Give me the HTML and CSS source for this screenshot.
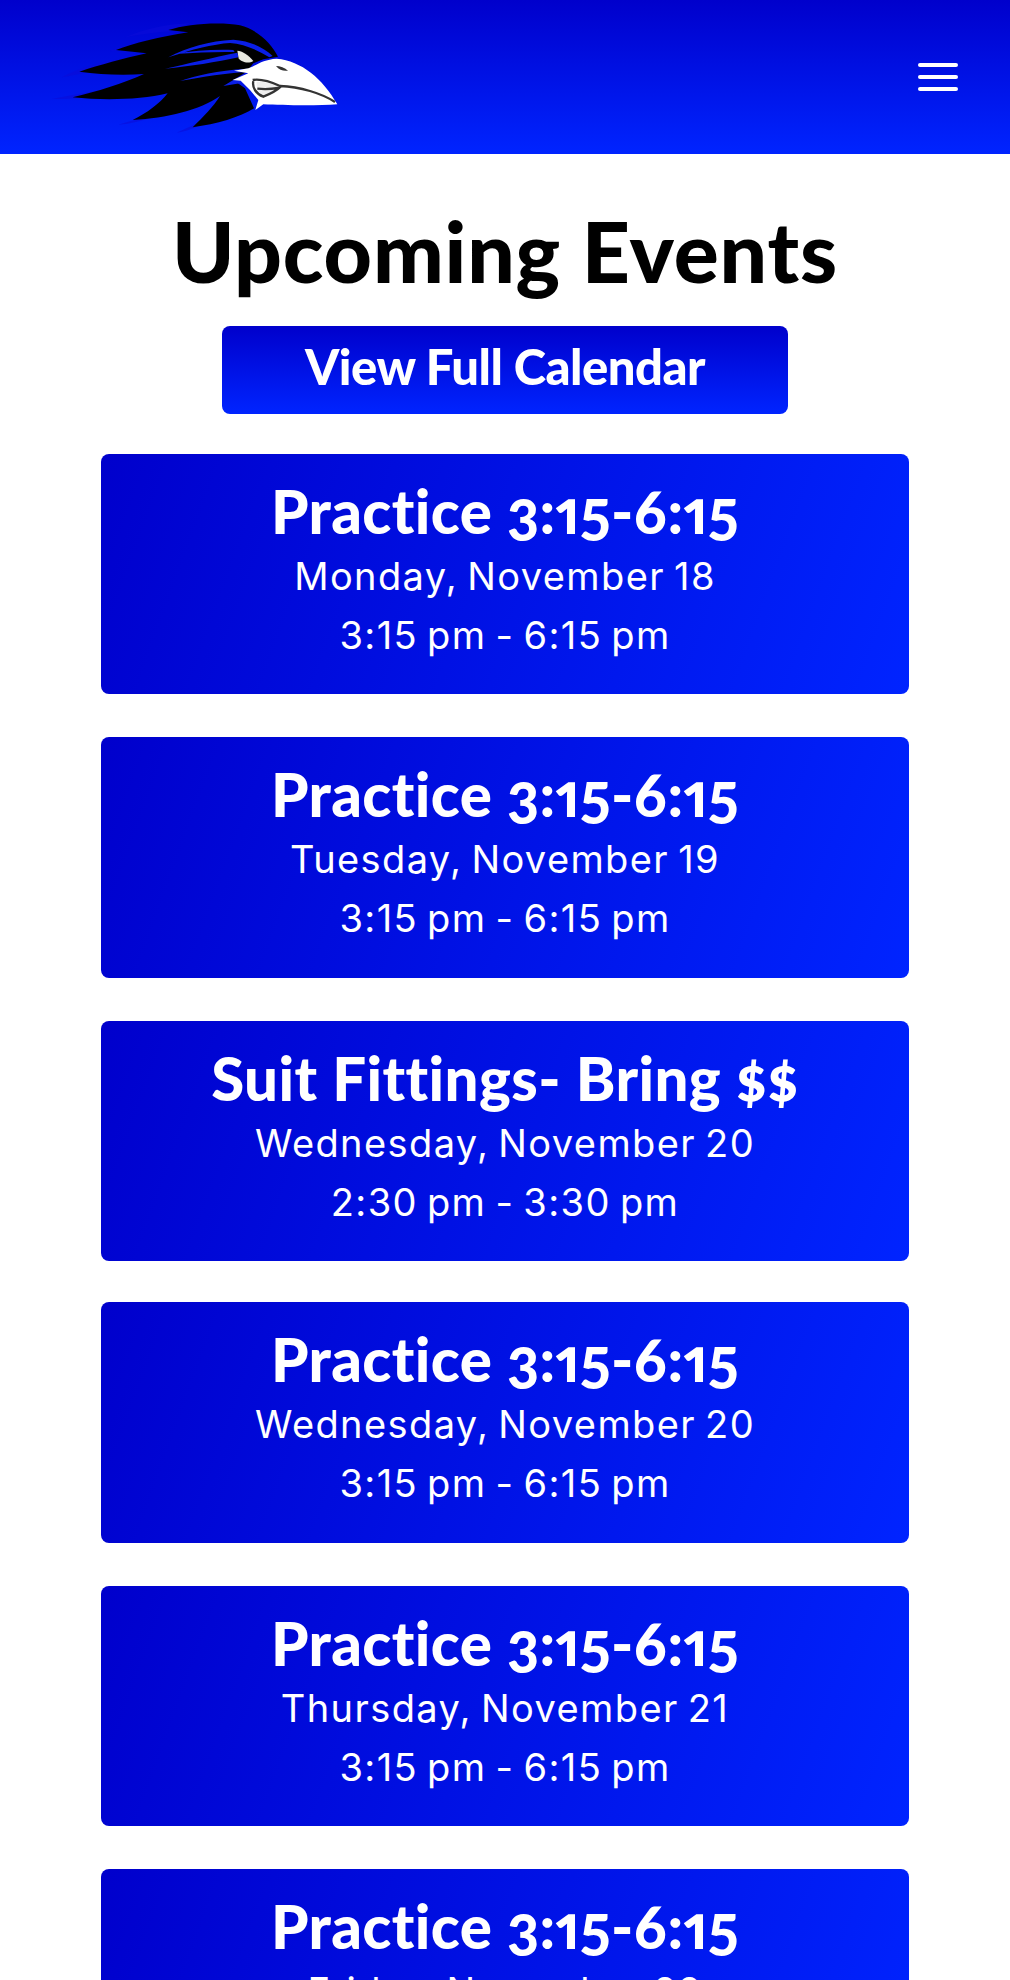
FILE: index.html
```html
<!DOCTYPE html>
<html lang="en">
<head>
    <meta charset="UTF-8">
    <meta name="viewport" content="width=device-width, initial-scale=1.0">
    <title>Upcoming Events</title>
    <link rel="stylesheet" href="styles.css">
</head>
<body>

<header class="site-header">
    <svg class="logo" viewBox="0 0 1200 462" role="img" aria-label="Raven logo">
        <path class="logo-haze" d="M570,70 C500,72 430,88 375,112 C420,104 460,98 510,94 Z M450,122 C400,128 365,138 330,154 L410,146 Z M360,176 C300,188 230,205 185,232 C220,226 260,218 300,206 Z M420,248 C320,268 240,280 155,297 C200,298 250,296 300,286 Z M510,325 C450,350 400,360 355,374 C390,372 430,362 470,348 Z M625,350 C590,370 560,385 530,398 C550,396 575,388 600,376 Z"/>
        <path class="logo-black" d="M505,90 C560,72 660,64 720,76 C770,88 815,130 834,170 L790,178 L760,190 L740,215 L700,240 L735,265 L762,325 C720,352 650,372 578,382 C610,350 640,320 660,288 C600,330 500,355 398,360 C440,340 480,310 503,280 C420,300 310,302 218,292 C290,275 370,250 432,222 C370,226 300,224 238,215 C300,195 370,175 440,160 L348,150 C400,130 480,110 565,97 Z"/>
        <path class="logo-blue" d="M505,172 C560,142 630,122 700,119 C750,122 790,142 818,168 L808,172 C770,148 730,132 690,129 C640,132 570,150 505,172 Z M525,162 C580,152 640,148 700,150 L704,156 C650,155 590,157 525,162 Z M495,206 C560,192 640,172 712,158 L716,172 C650,186 570,200 495,206 Z M540,243 C590,226 650,212 740,206 L770,210 L740,216 C680,220 610,230 540,243 Z M670,258 L700,240 L730,235 L720,250 Z"/>
        <path class="logo-white" d="M745,205 C770,195 790,178 830,176 C905,183 968,235 1012,313 C950,318 850,316 790,313 L766,330 L775,300 L750,270 L722,242 L698,240 L745,220 L702,212 Z"/>
        <path class="logo-eye" d="M712,152 C725,152 747,165 760,183 C745,193 723,186 716,175 Z"/>
        <path class="logo-teeth" d="M770,245 C790,244 815,250 840,260 C825,270 805,280 788,286 C775,278 768,260 770,245 Z"/>
        <path class="logo-line" d="M758,240 C780,236 805,242 840,258 C900,260 965,280 1005,306 M760,244 C756,262 768,282 790,290 C810,282 830,272 842,260 M772,266 C790,268 810,268 835,264"/>
        <path class="logo-dark" d="M828,198 C840,198 855,204 864,212 C850,214 838,210 828,198 Z"/>
    </svg>
    <button class="menu-toggle" type="button" aria-label="Menu">
        <span class="menu-bar"></span>
        <span class="menu-bar"></span>
        <span class="menu-bar"></span>
    </button>
</header>

<main class="events">
    <h1 class="events-title">Upcoming Events</h1>
    <a class="calendar-link" href="#">View Full Calendar</a>

    <article class="event">
        <h2 class="event-name">Practice 3:15-6:15</h2>
        <p class="event-line">Monday, November 18</p>
        <p class="event-line">3:15 pm - 6:15 pm</p>
    </article>
    <article class="event">
        <h2 class="event-name">Practice 3:15-6:15</h2>
        <p class="event-line">Tuesday, November 19</p>
        <p class="event-line">3:15 pm - 6:15 pm</p>
    </article>
    <article class="event event-short">
        <h2 class="event-name">Suit Fittings- Bring $$</h2>
        <p class="event-line">Wednesday, November 20</p>
        <p class="event-line">2:30 pm - 3:30 pm</p>
    </article>
    <article class="event">
        <h2 class="event-name">Practice 3:15-6:15</h2>
        <p class="event-line">Wednesday, November 20</p>
        <p class="event-line">3:15 pm - 6:15 pm</p>
    </article>
    <article class="event">
        <h2 class="event-name">Practice 3:15-6:15</h2>
        <p class="event-line">Thursday, November 21</p>
        <p class="event-line">3:15 pm - 6:15 pm</p>
    </article>
    <article class="event">
        <h2 class="event-name">Practice 3:15-6:15</h2>
        <p class="event-line">Friday, November 22</p>
        <p class="event-line">3:15 pm - 6:15 pm</p>
    </article>
</main>

</body>
</html>
```

FILE: styles.css
```css
html, body {
    height: 100vh;
    overflow: hidden;
}
body {
    margin: 0;
    padding: 0;
    background-color: #fff;
    font-family: "Inter", "Noto Sans", sans-serif;
    color: #000;
}
.site-header {
    display: flex;
    align-items: center;
    justify-content: space-between;
    height: 154px;
    padding-right: 52px;
    background: linear-gradient(180deg, #0000cc, #0024ff);
}
.logo {
    width: 400px;
    height: 154px;
}
.logo-haze { fill: #0a0cd8; opacity: 0.6; }
.logo-black { fill: #000; }
.logo-blue { fill: #0a1ee6; }
.logo-white { fill: #fff; }
.logo-eye { fill: #e8e8e0; }
.logo-teeth { fill: #eee; }
.logo-dark { fill: #333; }
.logo-line {
    fill: none;
    stroke: #333;
    stroke-width: 7;
}
.menu-toggle {
    display: flex;
    flex-direction: column;
    gap: 8px;
    width: 40px;
    padding: 0;
    border: none;
    background: none;
}
.menu-bar {
    display: block;
    width: 40px;
    height: 4px;
    border-radius: 2px;
    background-color: #fff;
}
.events {
    display: flex;
    flex-direction: column;
    align-items: center;
    padding: 0 101px;
    font-variant-ligatures: none;
}
.events-title {
    margin: 47px 0 1px;
    font-family: "Lato", sans-serif;
    font-size: 84px;
    font-weight: 900;
    line-height: 100px;
    letter-spacing: 0.8px;
}
.calendar-link {
    display: block;
    width: 566px;
    height: 88px;
    margin-top: 24px;
    border-radius: 8px;
    background: linear-gradient(180deg, #0000cc, #0024ff);
    color: #fff;
    font-family: "Lato", sans-serif;
    font-size: 49px;
    font-weight: 900;
    line-height: 80px;
    letter-spacing: -0.5px;
    text-align: center;
    text-decoration: none;
}
.event {
    width: 100%;
    height: 240.4px;
    margin-top: 43px;
    border-radius: 8px;
    background: linear-gradient(110deg, #0000cc, #0024ff);
    color: #fff;
    text-align: center;
}
.calendar-link + .event {
    margin-top: 40px;
}
.event-short + .event {
    margin-top: 41px;
}
.event-name {
    margin: 0;
    padding-top: 22px;
    font-family: "Lato", sans-serif;
    font-size: 60px;
    font-weight: 900;
    font-variant-numeric: oldstyle-nums proportional-nums;
    line-height: 71px;
    letter-spacing: 0.4px;
}
.event-line {
    margin: 0;
    font-size: 38px;
    font-weight: 400;
    line-height: 59px;
    letter-spacing: 1.4px;
    word-spacing: -3px;
}
```
